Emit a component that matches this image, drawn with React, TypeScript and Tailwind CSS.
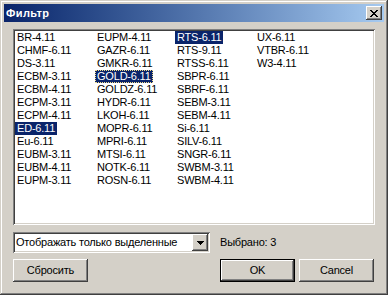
import React from "react";

type Item = { t: string; sel?: boolean; focus?: boolean };

const columns: Item[][] = [
  [
    { t: "BR-4.11" },
    { t: "CHMF-6.11" },
    { t: "DS-3.11" },
    { t: "ECBM-3.11" },
    { t: "ECBM-4.11" },
    { t: "ECPM-3.11" },
    { t: "ECPM-4.11" },
    { t: "ED-6.11", sel: true },
    { t: "Eu-6.11" },
    { t: "EUBM-3.11" },
    { t: "EUBM-4.11" },
    { t: "EUPM-3.11" },
  ],
  [
    { t: "EUPM-4.11" },
    { t: "GAZR-6.11" },
    { t: "GMKR-6.11" },
    { t: "GOLD-6.11", sel: true, focus: true },
    { t: "GOLDZ-6.11" },
    { t: "HYDR-6.11" },
    { t: "LKOH-6.11" },
    { t: "MOPR-6.11" },
    { t: "MPRI-6.11" },
    { t: "MTSI-6.11" },
    { t: "NOTK-6.11" },
    { t: "ROSN-6.11" },
  ],
  [
    { t: "RTS-6.11", sel: true },
    { t: "RTS-9.11" },
    { t: "RTSS-6.11" },
    { t: "SBPR-6.11" },
    { t: "SBRF-6.11" },
    { t: "SEBM-3.11" },
    { t: "SEBM-4.11" },
    { t: "Si-6.11" },
    { t: "SILV-6.11" },
    { t: "SNGR-6.11" },
    { t: "SWBM-3.11" },
    { t: "SWBM-4.11" },
  ],
  [{ t: "UX-6.11" }, { t: "VTBR-6.11" }, { t: "W3-4.11" }],
];

function ListItem({ item }: { item: Item }) {
  if (item.sel) {
    return (
      <div className="h-[13px] flex">
        <span
          className={
            "h-[13px] leading-[13px] px-[2px] bg-[#0a246a] text-white whitespace-nowrap " +
            (item.focus ? "outline outline-1 outline-dotted outline-[#f0dc8c] -outline-offset-1" : "")
          }
        >
          {item.t}
        </span>
      </div>
    );
  }
  return (
    <div className="h-[13px] flex">
      <span className="h-[13px] leading-[13px] px-[2px] whitespace-nowrap">{item.t}</span>
    </div>
  );
}

export default function App() {
  return (
    <div className="w-[388px] h-[295px] bg-[#d4d0c8] flex flex-col p-[4px] shadow-[inset_-1px_-1px_#404040,inset_1px_1px_#d4d0c8,inset_-2px_-2px_#808080,inset_2px_2px_#ffffff] font-['Liberation_Sans',Arial,sans-serif] text-[11px] text-black tracking-[-0.2px] select-none">
      {/* Title bar */}
      <div className="h-[18px] flex items-center justify-between bg-gradient-to-r from-[#0a246a] to-[#a6caf0] pl-[2px] pr-[2px]">
        <span className="font-bold text-white text-[11px] tracking-[0.4px]">Фильтр</span>
        <div className="w-[16px] h-[14px] bg-[#d4d0c8] flex items-center justify-center shadow-[inset_-1px_-1px_#404040,inset_1px_1px_#ffffff,inset_-2px_-2px_#808080]">
          <svg width="8" height="7" viewBox="0 0 8 7" shapeRendering="crispEdges">
            <path
              d="M0 0h2v1h-2zM6 0h2v1h-2zM1 1h2v1h-2zM5 1h2v1h-2zM2 2h4v1h-4zM3 3h2v1h-2zM2 4h4v1h-4zM1 5h2v1h-2zM5 5h2v1h-2zM0 6h2v1h-2zM6 6h2v1h-2z"
              fill="#000"
            />
          </svg>
        </div>
      </div>

      {/* Content */}
      <div className="flex flex-col px-[9px] pt-[7px]">
        {/* List box */}
        <div className="h-[196px] bg-white p-[2px] shadow-[inset_1px_1px_#808080,inset_-1px_-1px_#ffffff,inset_2px_2px_#404040,inset_-2px_-2px_#d4d0c8]">
          <div className="grid grid-cols-[80px_80px_80px_80px]">
            {columns.map((col, i) => (
              <div key={i} className="flex flex-col">
                {col.map((it) => (
                  <ListItem key={it.t} item={it} />
                ))}
              </div>
            ))}
          </div>
        </div>

        {/* Combo row */}
        <div className="mt-[7px] h-[21px] flex items-center">
          <div className="w-[197px] h-[21px] bg-white p-[2px] flex items-stretch shadow-[inset_1px_1px_#808080,inset_-1px_-1px_#ffffff,inset_2px_2px_#404040,inset_-2px_-2px_#d4d0c8]">
            <div className="flex-1 flex items-center pl-[1px] whitespace-nowrap overflow-hidden">
              Отображать только выделенные
            </div>
            <div className="w-[16px] h-[17px] bg-[#d4d0c8] flex items-center justify-center shadow-[inset_-1px_-1px_#404040,inset_1px_1px_#ffffff,inset_-2px_-2px_#808080]">
              <svg width="7" height="4" viewBox="0 0 7 4" shapeRendering="crispEdges">
                <path d="M0 0h7v1h-7zM1 1h5v1h-5zM2 2h3v1h-3zM3 3h1v1h-1z" fill="#000" />
              </svg>
            </div>
          </div>
          <span className="ml-[10px] whitespace-nowrap">Выбрано: 3</span>
        </div>

        {/* Buttons row */}
        <div className="mt-[6px] flex">
          <button className="w-[75px] h-[23px] bg-[#d4d0c8] flex items-center justify-center shadow-[inset_-1px_-1px_#404040,inset_1px_1px_#ffffff,inset_-2px_-2px_#808080]">
            Сбросить
          </button>
          <button className="ml-[132px] w-[75px] h-[23px] bg-[#d4d0c8] border border-black flex items-center justify-center shadow-[inset_-1px_-1px_#404040,inset_1px_1px_#ffffff,inset_-2px_-2px_#808080]">
            OK
          </button>
          <button className="ml-[4px] w-[75px] h-[23px] bg-[#d4d0c8] flex items-center justify-center shadow-[inset_-1px_-1px_#404040,inset_1px_1px_#ffffff,inset_-2px_-2px_#808080]">
            Cancel
          </button>
        </div>
      </div>
    </div>
  );
}
